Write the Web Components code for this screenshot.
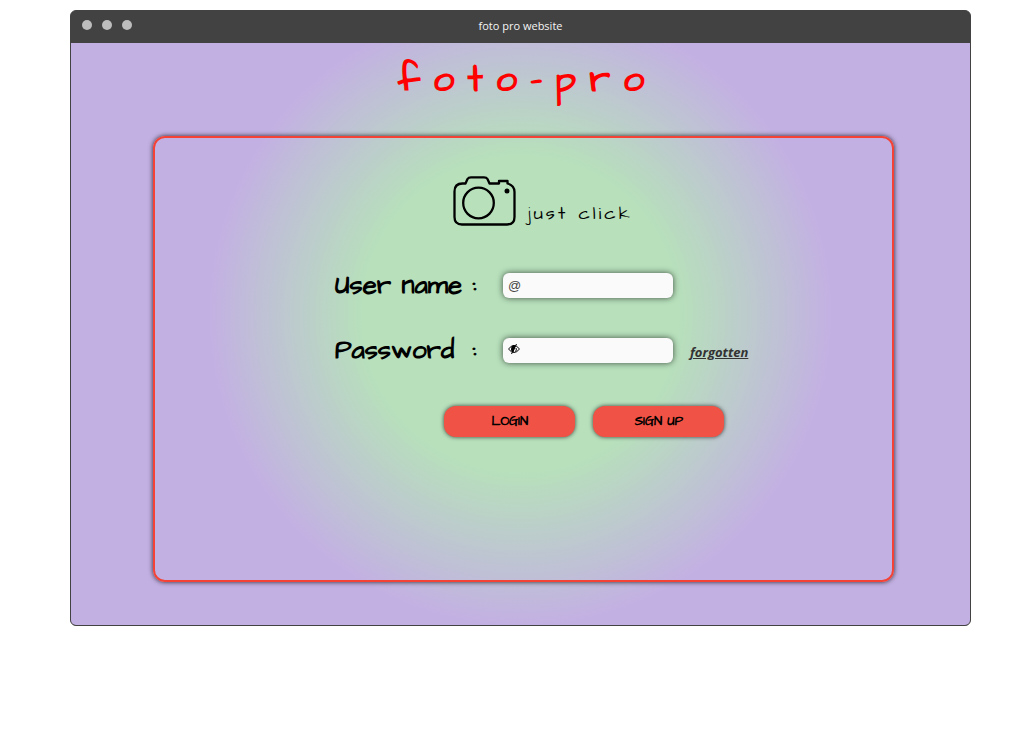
<!DOCTYPE html>
<html lang="en">
<head>
<meta charset="utf-8">
<meta name="viewport" content="width=device-width, initial-scale=1">
<title>foto pro website</title>
<style>
  body { margin: 0; padding: 10px 51px 24px 70px; background: #fff; color: #000;
    --hand: "Architects Daughter", Lato, sans-serif; --ui: "Open Sans", "Noto Sans", sans-serif; font-family: var(--hand); }
</style>
</head>
<body>
<browser-window caption="foto pro website">
  <site-title>foto-pro</site-title>
  <login-panel></login-panel>
</browser-window>

<script>
class Base extends HTMLElement {
  constructor() {
    super();
    this.attachShadow({ mode: "open" }).innerHTML = this.render();
  }
}

customElements.define("browser-window", class extends Base {
  render() {
    return `<style>
      :host { display: block; border: 1px solid #424242; border-radius: 6px; overflow: hidden; background: #424242; }
      header { display: grid; grid-template-columns: 1fr auto 1fr; align-items: center; height: 32px; padding: 0 11px;
        box-sizing: border-box; color: #f5f5f5; font: 11px/16px var(--ui); }
      header span { padding-bottom: 2px; }
      .dots { display: flex; gap: 10px; padding-bottom: 4px; }
      i { width: 10px; height: 10px; border-radius: 50%; background: #bdbdbd; }
      main { display: block; padding-bottom: 43px;
        background: radial-gradient(circle at 50% 271px, #b7e0bb 158px, #c3b0e3 312px); }
    </style>
    <header><div class="dots"><i></i><i></i><i></i></div><span>${this.getAttribute("caption")}</span></header>
    <main><slot></slot></main>`;
  }
});

customElements.define("site-title", class extends Base {
  render() {
    return `<style>
      :host { display: block; }
      h1 { margin: 0; padding: 7px 0 26px 14px; text-align: center; color: #f00;
        font-size: 38px; line-height: 60px; font-weight: 700; letter-spacing: 13px; }
    </style><h1><slot></slot></h1>`;
  }
});

customElements.define("camera-logo", class extends Base {
  render() {
    return `<style>
      :host { display: flex; justify-content: center; align-items: flex-end; gap: 11px; }
      svg { width: 64px; height: 50px; flex: none; }
      span { font-size: 18px; line-height: 24px; letter-spacing: 3px; }
    </style>
    <svg viewBox="0 0 64 50" fill="none" stroke="#000" stroke-width="2.3" stroke-linejoin="round" aria-hidden="true">
      <path d="M9.500 7.500H12.500L14.500 3Q15.500 1.300 18 1.300H31Q33.500 1.300 34.500 3L36.500 7.500H46V5H54.500V7.500Q61.500 9.500 61.500 16V41Q61.500 48.500 54 48.500H9Q1.500 48.500 1.500 41V15.500Q1.500 7.500 9.500 7.500Z"/>
      <circle cx="25.500" cy="27" r="15.300"/>
      <circle cx="54" cy="15" r="2.500" fill="#000" stroke="none"/>
    </svg><span><slot></slot></span>`;
  }
});

customElements.define("text-field", class extends Base {
  render() {
    const a = n => this.getAttribute(n) || "";
    return `<style>
      :host { display: grid; grid-template-columns: 168px 170px 1fr; align-items: center; }
      label { display: grid; grid-template-columns: 137px auto; align-items: center; font-size: 26px; line-height: 25px; font-weight: 700; white-space: nowrap; }
      .box { display: flex; align-items: center; gap: 4px; height: 25px; padding: 0 5px; box-sizing: border-box;
        background: #fafafa; border-radius: 6px; box-shadow: 0 0 6px rgba(0,0,0,.65); }
      input { flex: 1; min-width: 0; padding: 0; border: 0; outline: 0; background: none; font: 13px/20px "Liberation Sans", sans-serif; color: #333; }
      input::placeholder { color: #444; opacity: 1; }
      ::slotted(svg) { width: 12px; height: 12px; flex: none; margin-bottom: 3px; }
      ::slotted(a) { margin-left: 17px; padding-top: 3px; color: #333; font: italic 700 13px/18px var(--ui); }
    </style>
    <label for="f">${a("label")}<span>:</span></label>
    <div class="box"><slot name="icon"></slot><input id="f" type="${a("type")}" placeholder="${a("hint")}"></div>
    <slot></slot>`;
  }
});

customElements.define("action-button", class extends Base {
  render() {
    return `<style>
      :host { display: block; flex: 0 0 131px; }
      button { width: 100%; height: 31px; padding: 0 0 2px; border: 0; border-radius: 12px; background: #f05345; color: #000;
        font: 700 13px/20px var(--hand); box-shadow: 0 0 4px rgba(0,0,0,.7); }
    </style><button type="button"><slot></slot></button>`;
  }
});

customElements.define("login-panel", class extends Base {
  render() {
    return `<style>
      :host { display: block; margin: 0 76px 0 82px; padding: 38px 0 143px 35px; border: 2px solid #f44336;
        border-radius: 12px; box-shadow: 0 0 5px rgba(0,0,0,.8); }
      form { display: grid; width: 412px; max-width: 100%; margin: 0 auto; gap: 40px; }
      camera-logo { margin: 0 0 7px 2px; }
      .actions { display: flex; justify-content: flex-end; gap: 18px; padding: 3px 24px 0 0; }
    </style>
    <form>
      <camera-logo>just click</camera-logo>
      <text-field label="User name" type="text" hint="@"></text-field>
      <text-field label="Password" type="password">
        <svg slot="icon" viewBox="0 0 12 12" fill="none" stroke="#000" aria-hidden="true">
          <path d="M.5 6Q6 -1 11.500 6Q6 13 .5 6Z"/><path d="M4 3.500Q2.500 8 5 9L7 3Q5 2 4 3.500Z" fill="#000"/><path d="M3.500 11L8.500 1M7.500 8.500Q9 7 8 5"/>
        </svg>
        <a href="#forgotten">forgotten</a>
      </text-field>
      <div class="actions"><action-button>LOGIN</action-button><action-button>SIGN UP</action-button></div>
    </form>`;
  }
});
</script>
</body>
</html>
